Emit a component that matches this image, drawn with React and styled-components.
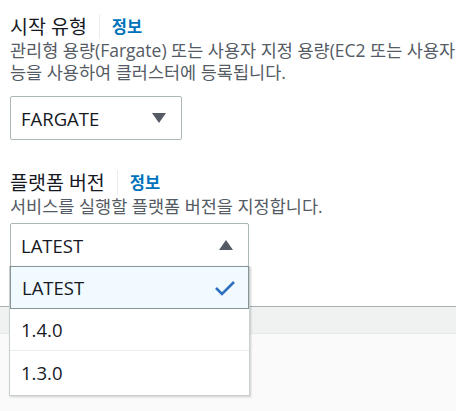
import React from "react";
import styled, { createGlobalStyle } from "styled-components";

const Global = createGlobalStyle`
  html, body { margin: 0; padding: 0; }
  body {
    background: #fafafa;
    overflow: hidden;
    font-family: "Open Sans", "Noto Sans CJK KR", sans-serif;
    color: #16191f;
  }
`;

const Page = styled.div`
  width: 456px;
  height: 411px;
  overflow: hidden;
  display: flex;
  flex-direction: column;
  background: #fafafa;
`;

const Panel = styled.div`
  background: #ffffff;
  border-bottom: 1px solid #a4b0b1;
  padding: 14px 0 39px 10px;
  display: flex;
  flex-direction: column;
`;

const Band = styled.div`
  height: 26px;
  background: #f0f1f1;
  border-bottom: 1px solid #e9ebeb;
`;

const Field = styled.div`
  display: flex;
  flex-direction: column;
  margin-bottom: ${(p) => p.$gap || 0}px;
`;

const LabelRow = styled.div`
  display: flex;
  align-items: center;
  height: 25px;
`;

const Label = styled.span`
  font-size: 19.5px;
  line-height: 25px;
  color: #16191f;
  white-space: nowrap;
`;

const Divider = styled.span`
  width: 1px;
  height: 25px;
  background: #eaeded;
  margin: 0 12px 0 12px;
`;

const Info = styled.a`
  font-size: 16.5px;
  font-weight: 700;
  color: #0073bb;
  text-decoration: none;
  line-height: 25px;
  white-space: nowrap;
`;

const Desc = styled.div`
  font-size: 17.5px;
  line-height: 22px;
  color: #545b64;
  white-space: nowrap;
`;

const SelectWrap = styled.div`
  position: relative;
  width: ${(p) => p.$w}px;
  margin-top: ${(p) => p.$top || 0}px;
`;

const Select = styled.div`
  box-sizing: border-box;
  height: 44px;
  border: 1px solid #aab7b8;
  border-radius: 2px;
  display: flex;
  align-items: center;
  justify-content: space-between;
  padding: 0 15px 0 10px;
  font-size: 18.5px;
  color: #16191f;
  background: #fff;
`;

const Caret = styled.svg`
  width: 14px;
  height: 10px;
  display: block;
`;

const Menu = styled.div`
  position: absolute;
  top: 43px;
  left: -1px;
  right: -1px;
  background: #fff;
  border: 1px solid #c8cfcf;
  border-top: none;
  box-shadow: 1px 1px 2px rgba(0, 0, 0, 0.18);
  padding-bottom: 2px;
  z-index: 5;
`;

const Option = styled.div`
  box-sizing: border-box;
  height: ${(p) => (p.$selected ? 43 : 42)}px;
  display: flex;
  align-items: center;
  justify-content: space-between;
  padding: 0 12px 0 11px;
  font-size: 18.5px;
  color: #16191f;
  background: ${(p) => (p.$selected ? "#f1faff" : "#fff")};
  border: ${(p) => (p.$selected ? "1px solid #879596" : "none")};
  border-bottom: ${(p) =>
    p.$selected ? "1px solid #879596" : p.$last ? "none" : "1px solid #eaeded"};
`;

const Check = styled.svg`
  width: 22px;
  height: 16px;
  display: block;
`;

const Down = () => (
  <Caret viewBox="0 0 14 10">
    <polygon points="0,0 14,0 7,10" fill="#545b64" />
  </Caret>
);

const Up = () => (
  <Caret viewBox="0 0 14 10">
    <polygon points="0,10 14,10 7,0" fill="#545b64" />
  </Caret>
);

export default function App() {
  return (
    <>
      <Global />
      <Page>
        <Panel>
          <Field $gap={30}>
            <LabelRow>
              <Label>시작 유형</Label>
              <Divider />
              <Info>정보</Info>
            </LabelRow>
            <Desc>
              관리형 용량(Fargate) 또는 사용자 지정 용량(EC2 또는 사용자 지정 기
              <br />
              능을 사용하여 클러스터에 등록됩니다.
            </Desc>
            <SelectWrap $w={172} $top={13}>
              <Select>
                <span>FARGATE</span>
                <Down />
              </Select>
            </SelectWrap>
          </Field>
          <Field>
            <LabelRow>
              <Label>플랫폼 버전</Label>
              <Divider />
              <Info>정보</Info>
            </LabelRow>
            <Desc>서비스를 실행할 플랫폼 버전을 지정합니다.</Desc>
            <SelectWrap $w={239} $top={6}>
              <Select>
                <span>LATEST</span>
                <Up />
              </Select>
              <Menu>
                <Option $selected>
                  <span>LATEST</span>
                  <Check viewBox="0 0 22 16">
                    <polyline
                      points="2,8 8,14 20,2"
                      fill="none"
                      stroke="#2e6fbf"
                      strokeWidth="2.6"
                    />
                  </Check>
                </Option>
                <Option>1.4.0</Option>
                <Option $last>1.3.0</Option>
              </Menu>
            </SelectWrap>
          </Field>
        </Panel>
        <Band />
      </Page>
    </>
  );
}
